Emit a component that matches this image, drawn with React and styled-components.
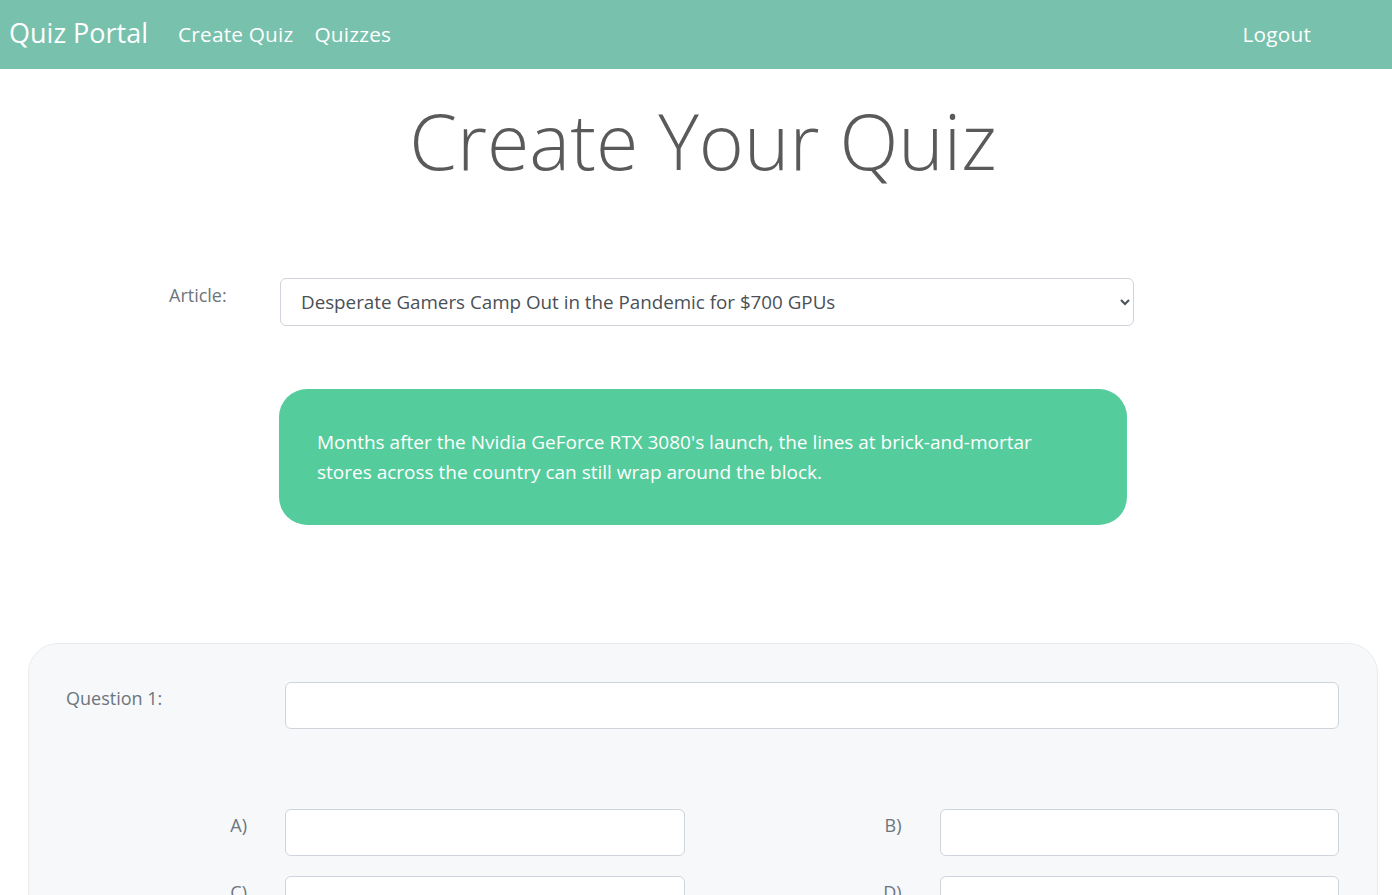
import styled, { createGlobalStyle } from 'styled-components';

const GlobalStyle = createGlobalStyle`
  * {
    box-sizing: border-box;
  }
  body {
    margin: 0;
    background: #ffffff;
    font-family: "Open Sans", "Noto Sans", sans-serif;
    color: #212529;
    overflow: hidden;
  }
`;

const articles = [
  'Desperate Gamers Camp Out in the Pandemic for $700 GPUs',
];

const App = () => {
  return (
    <>
      <GlobalStyle />
      <Nav>
        <Brand>Quiz Portal</Brand>
        <NavLinks>
          <NavLink href="#">Create Quiz</NavLink>
          <NavLink href="#">Quizzes</NavLink>
        </NavLinks>
        <Logout href="#">Logout</Logout>
      </Nav>
      <Main>
        <Title>Create Your Quiz</Title>
        <ArticleRow>
          <ArticleLabel>Article:</ArticleLabel>
          <Select defaultValue={articles[0]}>
            {articles.map((a) => (
              <option key={a}>{a}</option>
            ))}
          </Select>
        </ArticleRow>
        <Summary>
          <p>
            Months after the Nvidia GeForce RTX 3080's launch, the lines at brick-and-mortar
            stores across the country can still wrap around the block.
          </p>
        </Summary>
        <Card>
          <QuestionRow>
            <QuestionLabel>Question 1:</QuestionLabel>
            <Input type="text" />
          </QuestionRow>
          <Answers>
            {['A)', 'B)', 'C)', 'D)'].map((l) => (
              <AnswerRow key={l}>
                <AnswerLabel>{l}</AnswerLabel>
                <Input type="text" />
              </AnswerRow>
            ))}
          </Answers>
        </Card>
      </Main>
    </>
  );
};

const Nav = styled.nav`
  display: flex;
  align-items: center;
  height: 69px;
  padding: 0 9px 2px;
  background: #77c1ad;
  font-family: "Open Sans", sans-serif;
`;

const Brand = styled.a`
  color: #ffffff;
  font-size: 27px;
  margin-right: 30px;
  padding-bottom: 2px;
`;

const NavLinks = styled.div`
  display: flex;
  gap: 21px;
  flex: 1;
`;

const NavLink = styled.a`
  color: #ffffff;
  font-size: 20.8px;
  text-decoration: none;
  letter-spacing: 0.2px;
`;

const Logout = styled(NavLink)`
  margin-right: 72px;
`;

const Main = styled.main`
  display: flex;
  flex-direction: column;
`;

const Title = styled.h1`
  margin: 33px 0 0;
  text-align: center;
  padding-left: 14px;
  font-size: 77px;
  font-weight: 300;
  color: #5a5a5a;
  line-height: 1;
`;

const ArticleRow = styled.div`
  display: flex;
  align-items: flex-start;
  margin: 99px 0 0 169px;
`;

const ArticleLabel = styled.label`
  width: 111px;
  padding-top: 5px;
  font-size: 18px;
  color: #6c757d;
`;

const Select = styled.select`
  width: 854px;
  height: 48px;
  padding: 0 10px 0 16px;
  border: 1px solid #ced4da;
  border-radius: 6px;
  background: #ffffff;
  font-family: "Open Sans", sans-serif;
  font-size: 18.8px;
  color: #495057;
`;

const Summary = styled.div`
  width: 848px;
  margin: 63px 0 0 279px;
  padding: 38px 38px 38px;
  border-radius: 28px;
  background: #55cc9c;
  p {
    margin: 0;
    max-width: 740px;
    color: #ffffff;
    font-size: 19px;
    line-height: 30px;
  }
`;

const Card = styled.section`
  margin: 118px 14px 0 28px;
  padding: 38px 38px 40px 37px;
  background: #f7f8fa;
  border: 1px solid #e9ecef;
  border-radius: 30px;
`;

const QuestionRow = styled.div`
  display: grid;
  grid-template-columns: 219px 1fr;
  align-items: start;
`;

const QuestionLabel = styled.label`
  padding-top: 4px;
  font-size: 18px;
  color: #6c757d;
`;

const Answers = styled.div`
  display: grid;
  grid-template-columns: 1fr 1fr;
  column-gap: 36px;
  row-gap: 20px;
  margin-top: 80px;
`;

const AnswerRow = styled.div`
  display: grid;
  grid-template-columns: 219px 1fr;
  align-items: start;
`;

const AnswerLabel = styled.label`
  padding: 4px 38px 0 0;
  text-align: right;
  font-size: 18px;
  color: #6c757d;
`;

const Input = styled.input`
  height: 47px;
  width: 100%;
  border: 1px solid #ced4da;
  border-radius: 6px;
  background: #ffffff;
`;

export default App;
